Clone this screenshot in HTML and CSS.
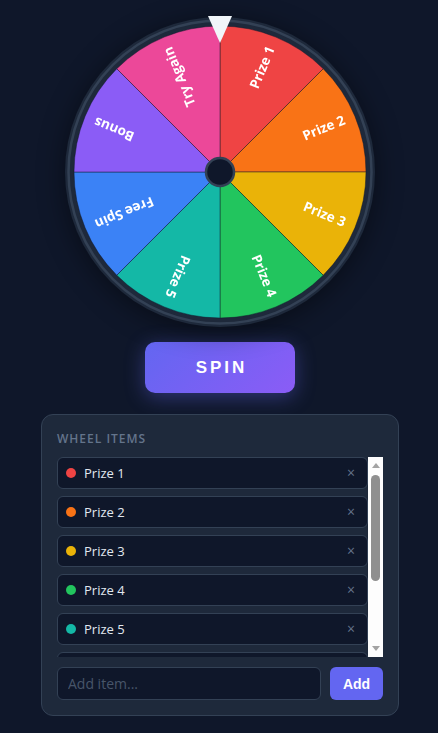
FILE: index.html
```html
<!DOCTYPE html>
<html lang="en">
<head>
<meta charset="utf-8">
<title>Spin the Wheel</title>
<link rel="stylesheet" href="styles.css">
</head>
<body>
<main class="app">
  <div class="wheel-wrap">
    <svg class="wheel" width="312" height="312" viewBox="0 0 312 312" xmlns="http://www.w3.org/2000/svg">
      <circle cx="156" cy="156" r="155" fill="#1e293b"/>
      <circle cx="156" cy="156" r="151.5" fill="none" stroke="#334155" stroke-width="2.5"/>
      <g class="slices" stroke="rgba(15,23,42,0.45)" stroke-width="1">
        <path d="M156 156 L156 10 A146 146 0 0 1 259.24 52.76 Z" fill="#ef4444"/>
        <path d="M156 156 L259.24 52.76 A146 146 0 0 1 302 156 Z" fill="#f97316"/>
        <path d="M156 156 L302 156 A146 146 0 0 1 259.24 259.24 Z" fill="#eab308"/>
        <path d="M156 156 L259.24 259.24 A146 146 0 0 1 156 302 Z" fill="#22c55e"/>
        <path d="M156 156 L156 302 A146 146 0 0 1 52.76 259.24 Z" fill="#14b8a6"/>
        <path d="M156 156 L52.76 259.24 A146 146 0 0 1 10 156 Z" fill="#3b82f6"/>
        <path d="M156 156 L10 156 A146 146 0 0 1 52.76 52.76 Z" fill="#8b5cf6"/>
        <path d="M156 156 L52.76 52.76 A146 146 0 0 1 156 10 Z" fill="#ec4899"/>
      </g>
      <g class="labels">
        <text transform="translate(156 156) rotate(-67.5)" x="135" y="0">Prize 1</text>
        <text transform="translate(156 156) rotate(-22.5)" x="135" y="0">Prize 2</text>
        <text transform="translate(156 156) rotate(22.5)" x="135" y="0">Prize 3</text>
        <text transform="translate(156 156) rotate(67.5)" x="135" y="0">Prize 4</text>
        <text transform="translate(156 156) rotate(112.5)" x="135" y="0">Prize 5</text>
        <text transform="translate(156 156) rotate(157.5)" x="135" y="0">Free Spin</text>
        <text transform="translate(156 156) rotate(202.5)" x="135" y="0">Bonus</text>
        <text transform="translate(156 156) rotate(247.5)" x="135" y="0">Try Again</text>
      </g>
      <circle cx="156" cy="156" r="14" fill="#0f172a" stroke="#334155" stroke-width="2.5"/>
      <polygon class="pointer" points="144,0 168,0 156,27" fill="#f1f5f9"/>
    </svg>
  </div>

  <button class="spin-btn" type="button">SPIN</button>

  <section class="panel">
    <h2 class="panel-title">WHEEL ITEMS</h2>
    <div class="list-box">
      <ul class="items">
        <li class="item"><span class="dot dot-red"></span><span class="item-name">Prize 1</span><span class="remove">×</span></li>
        <li class="item"><span class="dot dot-orange"></span><span class="item-name">Prize 2</span><span class="remove">×</span></li>
        <li class="item"><span class="dot dot-yellow"></span><span class="item-name">Prize 3</span><span class="remove">×</span></li>
        <li class="item"><span class="dot dot-green"></span><span class="item-name">Prize 4</span><span class="remove">×</span></li>
        <li class="item"><span class="dot dot-teal"></span><span class="item-name">Prize 5</span><span class="remove">×</span></li>
        <li class="item"><span class="dot dot-blue"></span><span class="item-name">Free Spin</span><span class="remove">×</span></li>
        <li class="item"><span class="dot dot-purple"></span><span class="item-name">Bonus</span><span class="remove">×</span></li>
        <li class="item"><span class="dot dot-pink"></span><span class="item-name">Try Again</span><span class="remove">×</span></li>
      </ul>
      <div class="scrollbar" aria-hidden="true">
        <span class="sb-btn"><span class="sb-arrow-up"></span></span>
        <span class="sb-thumb"></span>
        <span class="sb-fill"></span>
        <span class="sb-btn"><span class="sb-arrow-down"></span></span>
      </div>
    </div>
    <div class="add-row">
      <input class="add-input" type="text" placeholder="Add item...">
      <button class="add-btn" type="button">Add</button>
    </div>
  </section>
</main>
</body>
</html>
```

FILE: styles.css
```css
* {
  box-sizing: border-box;
}

html, body {
  margin: 0;
  height: 100%;
  overflow: hidden;
}

body {
  background: #0f172a;
  font-family: "Open Sans", "Noto Sans", sans-serif;
  color: #e2e8f0;
}

.app {
  display: flex;
  flex-direction: column;
  align-items: center;
  padding: 16px 0 0 2px;
}

.wheel-wrap {
  width: 312px;
  height: 312px;
}

.wheel {
  display: block;
  filter: drop-shadow(0 4px 14px rgba(0, 0, 0, 0.45));
}

.labels text {
  fill: #ffffff;
  font-family: "Open Sans", "Noto Sans", sans-serif;
  font-weight: 700;
  font-size: 13.5px;
  text-anchor: end;
  dominant-baseline: middle;
}

.spin-btn {
  margin-top: 14px;
  width: 150px;
  height: 51px;
  border: none;
  border-radius: 10px;
  background: linear-gradient(135deg, #6366f1, #8b5cf6);
  box-shadow: 0 4px 20px rgba(99, 102, 241, 0.4);
  color: #ffffff;
  font-family: "Liberation Sans", Arial, sans-serif;
  font-size: 17px;
  font-weight: 900;
  letter-spacing: 3px;
  padding: 0 0 0 3px;
  cursor: pointer;
}

.panel {
  margin-top: 21px;
  width: 358px;
  background: #1e293b;
  border: 1px solid #334155;
  border-radius: 12px;
  padding: 15px 15px 15px;
}

.panel-title {
  margin: 0 0 9px;
  font-size: 12px;
  line-height: 18px;
  font-weight: 600;
  letter-spacing: 1px;
  color: #64748b;
}

.list-box {
  display: flex;
  height: 200px;
}

.items {
  flex: 1;
  min-width: 0;
  list-style: none;
  margin: 0;
  padding: 0;
  overflow: hidden;
  display: flex;
  flex-direction: column;
  gap: 7px;
}

.scrollbar {
  flex: 0 0 15px;
  display: flex;
  flex-direction: column;
  background: #fdfdfd;
}

.sb-btn {
  flex: 0 0 15px;
  display: flex;
  align-items: center;
  justify-content: center;
}

.sb-arrow-up {
  width: 0;
  height: 0;
  border-left: 4px solid transparent;
  border-right: 4px solid transparent;
  border-bottom: 5px solid #a3a3a3;
  margin-top: 2px;
}

.sb-arrow-down {
  width: 0;
  height: 0;
  border-left: 4px solid transparent;
  border-right: 4px solid transparent;
  border-top: 5px solid #a3a3a3;
  margin-bottom: 2px;
}

.sb-thumb {
  flex: 0 0 106px;
  margin: 3px 3px 0;
  background: #8f8f8f;
  border-radius: 5px;
}

.sb-fill {
  flex: 1;
}

.item {
  flex: 0 0 32px;
  height: 32px;
  display: flex;
  align-items: center;
  gap: 8px;
  padding: 0 12px 0 8px;
  background: #0f172a;
  border: 1px solid #334155;
  border-radius: 6px;
}

.dot {
  width: 10px;
  height: 10px;
  border-radius: 50%;
  flex: none;
  margin-top: -1px;
}

.dot-red { background: #ef4444; }
.dot-orange { background: #f97316; }
.dot-yellow { background: #eab308; }
.dot-green { background: #22c55e; }
.dot-teal { background: #14b8a6; }
.dot-blue { background: #3b82f6; }
.dot-purple { background: #8b5cf6; }
.dot-pink { background: #ec4899; }

.item-name {
  flex: 1;
  font-size: 13px;
  color: #e2e8f0;
}

.remove {
  color: #64748b;
  font-size: 14px;
  line-height: 1;
}

.add-row {
  display: flex;
  gap: 9px;
  margin-top: 10px;
}

.add-input {
  flex: 1;
  min-width: 0;
  height: 33px;
  background: #0f172a;
  border: 1px solid #334155;
  border-radius: 6px;
  padding: 0 10px;
  color: #e2e8f0;
  font-family: "Open Sans", "Noto Sans", sans-serif;
  font-size: 14px;
  outline: none;
}

.add-input::placeholder {
  color: #475569;
}

.add-btn {
  width: 53px;
  height: 33px;
  border: none;
  border-radius: 6px;
  background: #6366f1;
  color: #ffffff;
  font-family: "Liberation Sans", Arial, sans-serif;
  font-size: 14px;
  font-weight: 700;
  padding: 0;
  cursor: pointer;
}
```
